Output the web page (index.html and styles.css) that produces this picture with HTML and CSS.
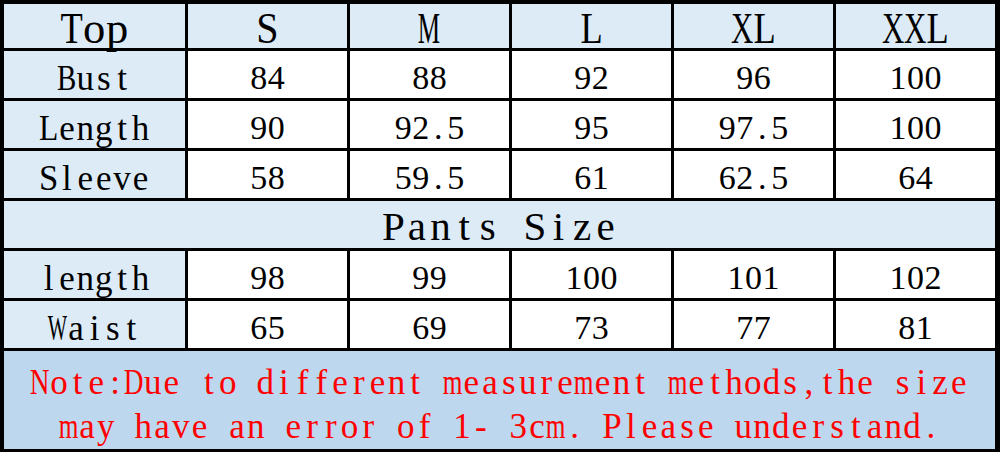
FILE: index.html
```html
<!DOCTYPE html>
<html lang="en">
<head>
<meta charset="utf-8">
<title>Size Chart</title>
<link rel="stylesheet" href="styles.css">
</head>
<body>
<div class="chart">
  <div class="cell head"><span class="mono top">Top</span></div>
  <div class="cell head"><span class="mono size">S</span></div>
  <div class="cell head"><span class="mono size">M</span></div>
  <div class="cell head"><span class="mono size">L</span></div>
  <div class="cell head"><span class="mono size">XL</span></div>
  <div class="cell head"><span class="mono size">XXL</span></div>

  <div class="cell label"><span class="mono">Bust</span></div>
  <div class="cell num"><span class="mono">84</span></div>
  <div class="cell num"><span class="mono">88</span></div>
  <div class="cell num"><span class="mono">92</span></div>
  <div class="cell num"><span class="mono">96</span></div>
  <div class="cell num"><span class="mono">100</span></div>

  <div class="cell label"><span class="mono">Length</span></div>
  <div class="cell num"><span class="mono">90</span></div>
  <div class="cell num"><span class="mono">92.5</span></div>
  <div class="cell num"><span class="mono">95</span></div>
  <div class="cell num"><span class="mono">97.5</span></div>
  <div class="cell num"><span class="mono">100</span></div>

  <div class="cell label"><span class="mono">Sleeve</span></div>
  <div class="cell num"><span class="mono">58</span></div>
  <div class="cell num"><span class="mono">59.5</span></div>
  <div class="cell num"><span class="mono">61</span></div>
  <div class="cell num"><span class="mono">62.5</span></div>
  <div class="cell num"><span class="mono">64</span></div>

  <div class="cell section"><span class="mono">Pants Size</span></div>

  <div class="cell label"><span class="mono">length</span></div>
  <div class="cell num"><span class="mono">98</span></div>
  <div class="cell num"><span class="mono">99</span></div>
  <div class="cell num"><span class="mono">100</span></div>
  <div class="cell num"><span class="mono">101</span></div>
  <div class="cell num"><span class="mono">102</span></div>

  <div class="cell label"><span class="mono">Waist</span></div>
  <div class="cell num"><span class="mono">65</span></div>
  <div class="cell num"><span class="mono">69</span></div>
  <div class="cell num"><span class="mono">73</span></div>
  <div class="cell num"><span class="mono">77</span></div>
  <div class="cell num"><span class="mono">81</span></div>

  <div class="cell note">
    <div class="mono line">Note:Due to different measurement methods,the size</div>
    <div class="mono line">may have an error of 1- 3cm. Please understand.</div>
  </div>
</div>
<script src="script.js"></script>
</body>
</html>
```

FILE: styles.css
```css
html, body {
  margin: 0;
  padding: 0;
  background: #000;
}

.chart {
  width: 1000px;
  height: 452px;
  box-sizing: border-box;
  padding: 4px 5px 5px 4px;
  background: #000;
  display: grid;
  grid-template-columns: 181px repeat(5, 1fr);
  grid-template-rows: 44px repeat(6, 47px) 1fr;
  gap: 3px;
  font-family: "Liberation Serif", "Times New Roman", serif;
  color: #000;
}

.cell {
  display: flex;
  align-items: center;
  justify-content: center;
  background: #fff;
  line-height: 1;
  box-sizing: border-box;
}

.mono {
  --cw: 18.4px;
  --fit: 1.05;
  display: flex;
  justify-content: center;
  white-space: nowrap;
}

.c {
  display: inline-flex;
  justify-content: center;
  flex: 0 0 auto;
  width: var(--cw);
  white-space: pre;
}

.g {
  display: inline-block;
  flex: 0 0 auto;
  white-space: pre;
}

.head {
  background: #ddebf7;
  font-size: 45px;
  padding-top: 4px;
}

.head .mono {
  --cw: 22.3px;
  --fit: 1.0;
}

.top {
  --fit: 1.3;
}

.label {
  background: #ddebf7;
  font-size: 35px;
  padding-top: 8px;
}

.num {
  font-size: 34px;
  padding-top: 6px;
}

.num .mono {
  --cw: 17.5px;
}

.section {
  grid-column: 1 / -1;
  background: #ddebf7;
  font-size: 41px;
  padding-top: 3px;
}

.section .mono {
  --cw: 23.6px;
}

.note {
  grid-column: 1 / -1;
  background: #bdd7ee;
  color: #ff0000;
  font-size: 35px;
  flex-direction: column;
  padding-top: 10px;
}

.note .mono {
  --cw: 18.75px;
}

.line {
  line-height: 44px;
}
```

FILE: script.js
```js
document.querySelectorAll('.mono').forEach(function (el) {
  var text = el.textContent;
  el.textContent = '';
  var cs = getComputedStyle(el);
  var cw = parseFloat(cs.getPropertyValue('--cw'));
  var fit = parseFloat(cs.getPropertyValue('--fit')) || 1.05;
  for (var i = 0; i < text.length; i++) {
    var s = document.createElement('span');
    s.className = 'c';
    var g = document.createElement('span');
    g.className = 'g';
    g.textContent = text[i];
    s.appendChild(g);
    el.appendChild(s);
    var w = g.getBoundingClientRect().width;
    var max = cw * fit;
    if (w > max) {
      g.style.transform = 'scaleX(' + (max / w).toFixed(3) + ')';
    }
  }
});
```
